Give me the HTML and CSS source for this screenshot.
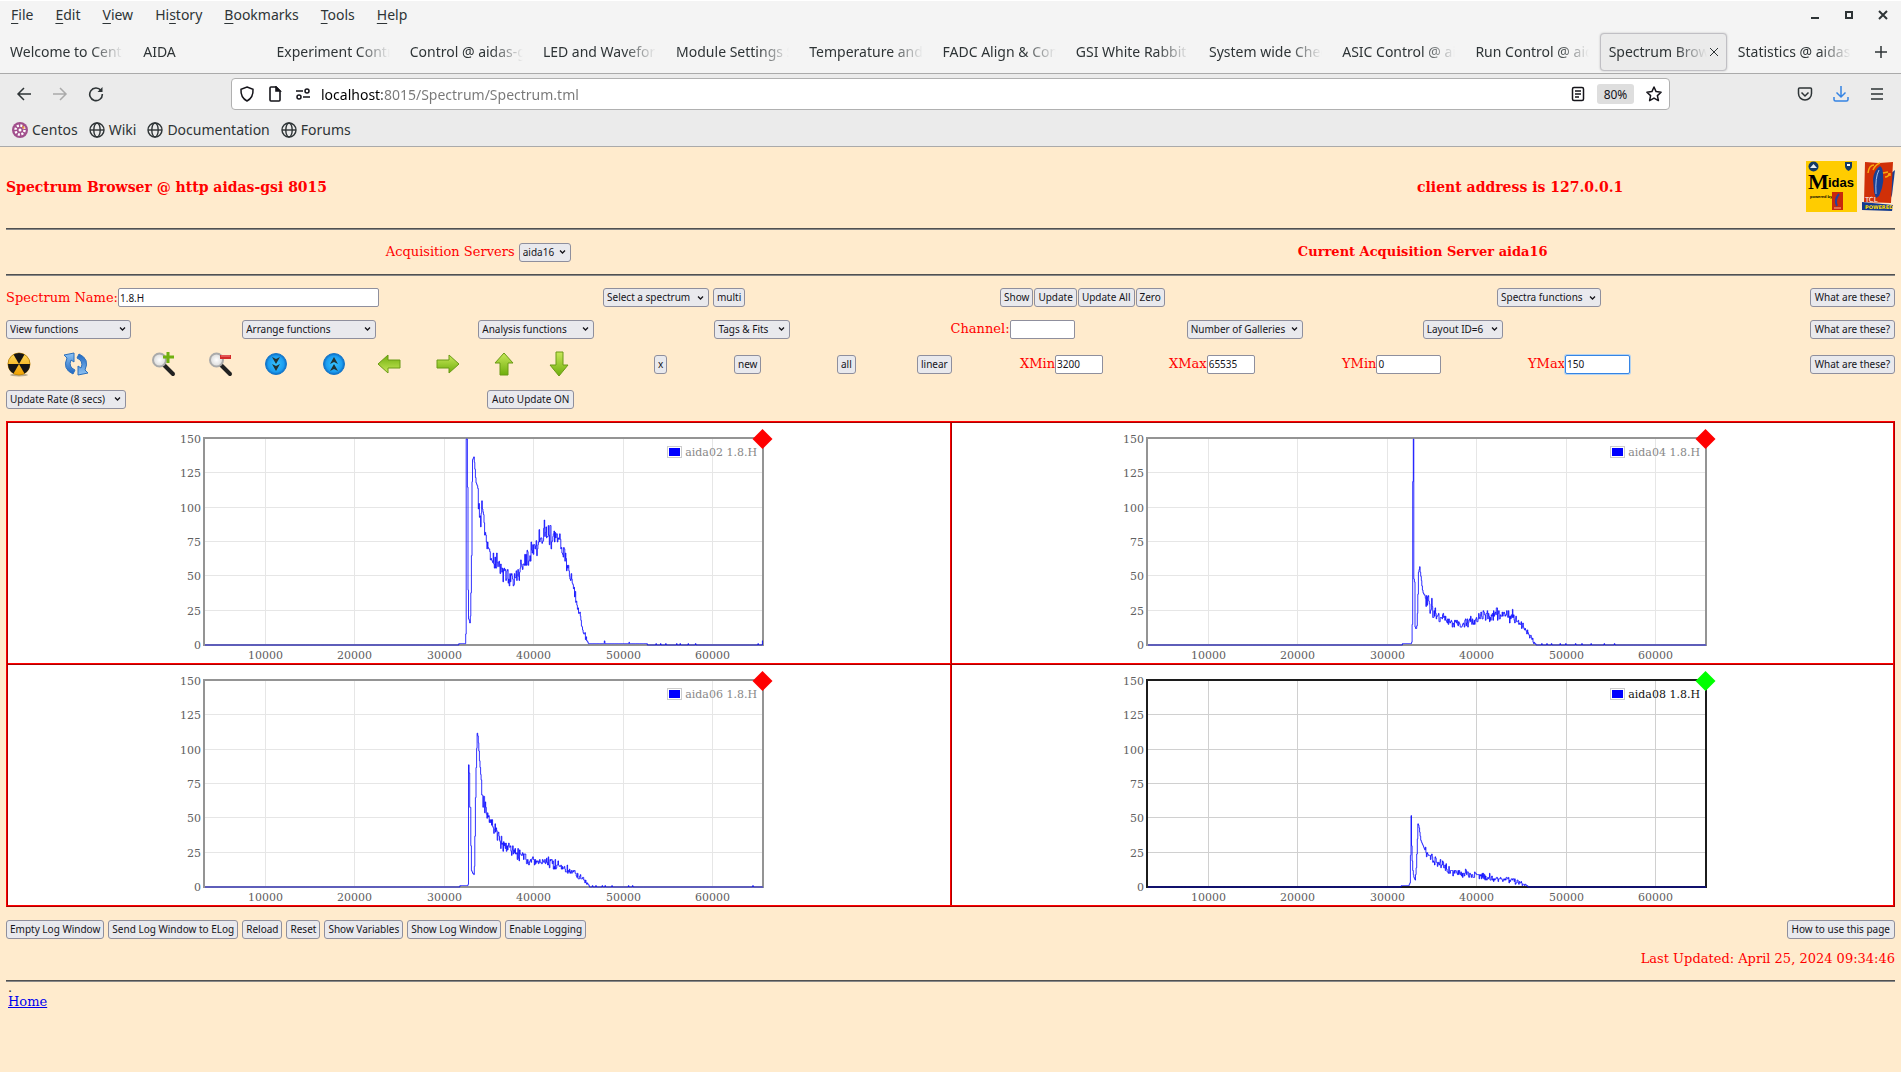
FILE: index.html
```html
<!DOCTYPE html>
<html lang="en">
<head>
<meta charset="utf-8">
<title>Spectrum Browser @ aidas-gsi</title>
<link rel="stylesheet" href="styles.css">
</head>
<body>
<svg class="defs" width="0" height="0" aria-hidden="true">
  <defs>
    <linearGradient id="green" x1="0" y1="0" x2="0" y2="1"><stop offset="0" stop-color="#c8e85a"/><stop offset="1" stop-color="#6fae0c"/></linearGradient>
    <linearGradient id="blue" x1="0" y1="0" x2="0" y2="1"><stop offset="0" stop-color="#8fc4f4"/><stop offset="1" stop-color="#1f66c0"/></linearGradient>
    <radialGradient id="disc"><stop offset="0" stop-color="#35c3ff"/><stop offset="0.75" stop-color="#1c9df0"/><stop offset="1" stop-color="#0b6cc4"/></radialGradient>
    <radialGradient id="lens"><stop offset="0" stop-color="#ffffff"/><stop offset="1" stop-color="#d9d9d9"/></radialGradient>
    <linearGradient id="gold" x1="0" y1="0" x2="0" y2="1"><stop offset="0" stop-color="#ffd95c"/><stop offset="1" stop-color="#f0a000"/></linearGradient>
    <symbol id="globe" viewBox="0 0 16 16"><g fill="none" stroke="#2e3436" stroke-width="1.4"><circle cx="8" cy="8" r="7"/><ellipse cx="8" cy="8" rx="3.2" ry="7"/><path d="M1 8h14"/></g></symbol>
    <symbol id="arrow" viewBox="0 0 26 26"><path d="M2 9h12V4l10 9-10 9v-5H2z" fill="url(#green)" stroke="#6a9a16" stroke-width="1"/></symbol>
    <symbol id="arrow-down" viewBox="0 0 26 26"><path d="M10 1h7v13h5L13 25 4 14h6z" fill="url(#green)" stroke="#6a9a16" stroke-width="1"/></symbol>
    <symbol id="arrow-up" viewBox="0 0 26 26"><path d="M9 24h8V12h5L13 2 4 12h5z" fill="url(#green)" stroke="#6a9a16" stroke-width="1"/></symbol>
    <symbol id="lens-tool" viewBox="0 0 26 26"><path d="M13 14l9 9" stroke="#222" stroke-width="4" stroke-linecap="round"/><circle cx="8.500" cy="9" r="6.500" fill="url(#lens)" stroke="#aaa" stroke-width="2"/></symbol>
  </defs>
</svg>

<header class="chrome">
  <div class="titlebar">
    <nav class="menus">
      <a href="#"><u>F</u>ile</a><a href="#"><u>E</u>dit</a><a href="#"><u>V</u>iew</a><a href="#">Hi<u>s</u>tory</a><a href="#"><u>B</u>ookmarks</a><a href="#"><u>T</u>ools</a><a href="#"><u>H</u>elp</a>
    </nav>
    <div class="window-buttons">
      <button aria-label="Minimize"><svg width="10" height="10"><path d="M1 8h8" stroke="#2e3436" stroke-width="2"/></svg></button>
      <button aria-label="Maximize"><svg width="10" height="10"><path d="M2 2h6v6H2z" fill="none" stroke="#2e3436" stroke-width="2"/></svg></button>
      <button aria-label="Close"><svg width="10" height="10"><path d="M1 1l8 8M9 1L1 9" stroke="#2e3436" stroke-width="2"/></svg></button>
    </div>
  </div>
  <div class="tabbar">
    <div class="tab"><span>Welcome to CentOS</span></div>
    <div class="tab"><span>AIDA</span></div>
    <div class="tab"><span>Experiment Control</span></div>
    <div class="tab"><span>Control @ aidas-gsi</span></div>
    <div class="tab"><span>LED and Waveform</span></div>
    <div class="tab"><span>Module Settings Se</span></div>
    <div class="tab"><span>Temperature and s</span></div>
    <div class="tab"><span>FADC Align &amp; Control</span></div>
    <div class="tab"><span>GSI White Rabbit T</span></div>
    <div class="tab"><span>System wide Check</span></div>
    <div class="tab"><span>ASIC Control @ aid</span></div>
    <div class="tab"><span>Run Control @ aidas</span></div>
    <div class="tab tab-active"><span>Spectrum Browser</span><button aria-label="Close tab"><svg width="10" height="10"><path d="M1 1l8 8M9 1L1 9" stroke="#2e3436"/></svg></button></div>
    <div class="tab"><span>Statistics @ aidas-g</span></div>
    <button class="new-tab" aria-label="New tab"><svg width="14" height="14"><path d="M7 1v12M1 7h12" stroke="#2e3436" stroke-width="1.500"/></svg></button>
  </div>
  <div class="toolbar">
    <div class="nav-buttons">
      <button aria-label="Back"><svg width="16" height="16" fill="none" stroke="#2e3436" stroke-width="1.500"><path d="M15 8H2M8 2L2 8l6 6"/></svg></button>
      <button aria-label="Forward"><svg width="16" height="16" fill="none" stroke="#aaa" stroke-width="1.500"><path d="M1 8h13M8 2l6 6-6 6"/></svg></button>
      <button aria-label="Reload"><svg width="16" height="16" fill="none" stroke="#2e3436" stroke-width="1.600"><path d="M13 4.500A6.300 6.300 0 1 0 14.300 8"/><path d="M14.500 1v5h-5z" fill="#2e3436" stroke="none"/></svg></button>
    </div>
    <div class="urlbar">
      <svg width="16" height="16" fill="none" stroke="#15141a" stroke-width="1.500"><path d="M8 1l6 2.300c.4 6-2 9.700-6 11.700C4 13 1.600 9.300 2 3.300z"/></svg>
      <svg width="16" height="16" fill="none" stroke="#15141a" stroke-width="1.600"><path d="M3 2q0-1 1-1h5l4 4v9q0 1-1 1H4q-1 0-1-1z"/><path d="M9 1v4h4z" fill="#15141a"/></svg>
      <svg width="16" height="16" fill="none" stroke="#15141a" stroke-width="1.500"><path d="M1 5h7M8 11h7"/><circle cx="12" cy="5" r="2"/><circle cx="4" cy="11" r="2"/></svg>
      <input class="url" type="text" aria-label="Address" value="localhost:8015/Spectrum/Spectrum.tml">
      <svg width="14" height="16" fill="none" stroke="#15141a" stroke-width="1.500"><rect x="1.500" y="1.500" width="11" height="13" rx="1.500"/><path d="M4 5h6M4 8h6M4 11h4"/></svg>
      <button class="zoom">80%</button>
      <svg width="16" height="16" fill="none" stroke="#15141a" stroke-width="1.500" stroke-linejoin="round"><path d="M8 1l2.100 4.600 5 .6-3.700 3.400 1 5L8 12.100l-4.400 2.500 1-5L.9 6.200l5-.6z"/></svg>
    </div>
    <div class="side-buttons">
      <button aria-label="Pocket"><svg width="16" height="16" fill="none" stroke="#2e3436" stroke-width="1.500"><path d="M2.500 2h11q1 0 1 1v4.500a6.500 6.500 0 0 1-13 0V3q0-1 1-1z"/><path d="M4.500 6.500L8 10l3.500-3.500"/></svg></button>
      <button aria-label="Downloads"><svg width="16" height="16" fill="none" stroke="#3584e4" stroke-width="1.500"><path d="M8 0v11M3.500 6.500L8 11l4.500-4.500M1 11v2.500q0 1.500 1.500 1.500h11q1.500 0 1.500-1.500V11"/></svg></button>
      <button aria-label="Menu"><svg width="16" height="16" stroke="#2e3436" stroke-width="1.500"><path d="M2 3h12M2 8h12M2 13h12"/></svg></button>
    </div>
  </div>
  <nav class="bookmarks">
    <a href="#"><svg width="16" height="16"><circle cx="8" cy="8" r="8" fill="#a14f8c"/><circle cx="8" cy="8" r="4.500" fill="none" stroke="#fff" stroke-width="2.500" stroke-dasharray="2 1.500"/><circle cx="8" cy="8" r="1.500" fill="#fff"/><path d="M10 3l3 3-2 1z" fill="#f0a030"/></svg>Centos</a>
    <a href="#"><svg width="16" height="16"><use href="#globe"/></svg>Wiki</a>
    <a href="#"><svg width="16" height="16"><use href="#globe"/></svg>Documentation</a>
    <a href="#"><svg width="16" height="16"><use href="#globe"/></svg>Forums</a>
  </nav>
</header>

<main class="page">
  <div class="heading">
    <h1>Spectrum Browser @ http aidas-gsi 8015</h1>
    <h1>client address is 127.0.0.1</h1>
    <div class="logos">
      <svg width="51" height="51" role="img" aria-label="Midas">
        <rect width="51" height="51" fill="#fc0"/>
        <circle cx="7.500" cy="5.500" r="5" fill="#123a66"/><path d="M4 7l3.500-4L11 7z" fill="#e8eef4"/>
        <path d="M39 1h7v4q0 3-3.500 5Q39 8 39 5z" fill="#123a66"/><path d="M41 3h3v2h-3z" fill="#fff"/>
        <text x="2" y="28" class="midas-m">M</text><text x="22" y="26" class="midas-rest">idas</text>
        <text x="4" y="37" class="midas-by">powered by</text>
        <rect x="26" y="31" width="11" height="18" fill="#c8280c"/><path d="M33 33q-5 6-2 12" fill="none" stroke="#24419c" stroke-width="2"/><path d="M28 47h7" stroke="#f8b090"/>
      </svg>
      <svg width="34" height="51" role="img" aria-label="Tcl powered">
        <path d="M1 41l31 3-1 6-30-1z" fill="#123a90"/>
        <path d="M28 14l6-5-3 25-3 8z" fill="#173f95"/>
        <path d="M4 1l14 1 14-1-2 41-27-1z" fill="#d03008"/>
        <path d="M19 5q-6 4-7 13l1 13 2 6 3-2 3-8q2-7 1-14 0-6-3-8z" fill="#173f95"/>
        <path d="M18 9q-4 7-3 24" fill="none" stroke="#a9c2ea"/>
        <path d="M7 12q1-8 6-8M12 9q2-5 7-7M22 12l5-1M24 16q4 0 4-4M29 12v3" fill="none" stroke="#f8a810" stroke-width="1.500"/>
        <text x="4" y="41" class="tcl">TCL</text><text x="4" y="48" class="tcl-by">POWERED</text>
      </svg>
    </div>
  </div>
  <hr>
  <div class="servers">
    <div><label for="server">Acquisition Servers</label> <select id="server" class="w52"><option>aida16</option></select></div>
    <h2>Current Acquisition Server aida16</h2>
  </div>
  <hr>

  <div class="row row-name">
    <div class="field"><label for="name">Spectrum Name:</label><input id="name" class="w261" type="text" value="1.8.H"></div>
    <div class="field spaced"><select class="w106" aria-label="Select a spectrum"><option>Select a spectrum</option></select><button>multi</button></div>
    <div class="field tight"><button>Show</button><button>Update</button><button>Update All</button><button>Zero</button></div>
    <div class="field"><select class="w104" aria-label="Spectra functions"><option>Spectra functions</option></select></div>
    <div class="field"><button class="help">What are these?</button></div>
  </div>
  <div class="row row-functions">
    <div class="field"><select class="w125" aria-label="View functions"><option>View functions</option></select></div>
    <div class="field"><select class="w134" aria-label="Arrange functions"><option>Arrange functions</option></select></div>
    <div class="field"><select class="w116" aria-label="Analysis functions"><option>Analysis functions</option></select></div>
    <div class="field"><select class="w76" aria-label="Tags and fits"><option>Tags &amp; Fits</option></select></div>
    <div class="field"><label for="channel">Channel:</label><input id="channel" class="w65" type="text"></div>
    <div class="field"><select class="w116" aria-label="Number of Galleries"><option>Number of Galleries</option></select></div>
    <div class="field"><select class="w80" aria-label="Layout"><option>Layout ID=6</option></select></div>
    <div class="field"><button class="help">What are these?</button></div>
  </div>
  <div class="row row-tools">
    <button class="icon" aria-label="Radiation"><svg width="26" height="26" viewBox="0 0 26 26"><ellipse cx="13" cy="24" rx="9" ry="1.500" fill="#b9a98c"/><circle cx="13" cy="13" r="11" fill="url(#gold)" stroke="#c08a10"/><g fill="#151515"><path id="blade" d="M13 13L7.500 3.500A11 11 0 0 1 18.500 3.500z"/><use href="#blade" transform="rotate(120 13 13)"/><use href="#blade" transform="rotate(240 13 13)"/></g></svg></button>
    <button class="icon" aria-label="Refresh"><svg width="26" height="26" viewBox="0 0 26 26"><g><path id="turn" d="M10 23Q-1 18 4 7L1 4 11 2v9L8 9q-3 7 4 10z" fill="url(#blue)" stroke="#2b6fbc"/><use href="#turn" transform="rotate(180 13 13)"/></g></svg></button>
    <button class="icon" aria-label="Zoom in"><svg width="26" height="26"><use href="#lens-tool"/><path d="M17 1v11M12 6h11" stroke="#6fb010" stroke-width="3"/></svg></button>
    <button class="icon" aria-label="Zoom out"><svg width="26" height="26"><use href="#lens-tool"/><path d="M12 6h11" stroke="#d42a2a" stroke-width="4"/><path d="M13 5h9" stroke="#f08080"/></svg></button>
    <button class="icon" aria-label="Page down"><svg width="26" height="26"><circle cx="13" cy="13" r="10.500" fill="url(#disc)" stroke="#1877c8"/><path d="M9 6l4 2 4-2-4 7zM9 13l4 2 4-2-4 7z" fill="#233"/></svg></button>
    <button class="icon" aria-label="Page up"><svg width="26" height="26"><circle cx="13" cy="13" r="10.500" fill="url(#disc)" stroke="#1877c8"/><path d="M9 13l4-7 4 7-4-2zM9 20l4-7 4 7-4-2z" fill="#233"/></svg></button>
    <button class="icon" aria-label="Left"><svg width="26" height="26"><use href="#arrow" transform="rotate(180 13 13)"/></svg></button>
    <button class="icon" aria-label="Right"><svg width="26" height="26"><use href="#arrow"/></svg></button>
    <button class="icon" aria-label="Up"><svg width="26" height="26"><use href="#arrow-up"/></svg></button>
    <button class="icon" aria-label="Down"><svg width="26" height="26"><use href="#arrow-down"/></svg></button>
    <div class="field"><button>x</button></div>
    <div class="field"><button>new</button></div>
    <div class="field"><button>all</button></div>
    <div class="field"><button>linear</button></div>
    <div class="field"><label for="xmin">XMin</label><input id="xmin" class="w48" type="text" value="3200"></div>
    <div class="field"><label for="xmax">XMax</label><input id="xmax" class="w48" type="text" value="65535"></div>
    <div class="field"><label for="ymin">YMin</label><input id="ymin" class="w65" type="text" value="0"></div>
    <div class="field"><label for="ymax">YMax</label><input id="ymax" class="w65 focused" type="text" value="150"></div>
    <div class="field"><button class="help">What are these?</button></div>
  </div>
  <div class="row row-update">
    <div class="field"><select class="w120" aria-label="Update Rate"><option>Update Rate (8 secs)</option></select></div>
    <div class="field"><button class="help">Auto Update ON</button></div>
  </div>

  <section class="galleries">
    <div class="gallery" data-spectrum="aida02"></div>
    <div class="gallery" data-spectrum="aida04"></div>
    <div class="gallery" data-spectrum="aida06"></div>
    <div class="gallery active" data-spectrum="aida08"></div>
  </section>

  <div class="actions">
    <button>Empty Log Window</button><button>Send Log Window to ELog</button><button>Reload</button><button>Reset</button><button>Show Variables</button><button>Show Log Window</button><button>Enable Logging</button>
    <button class="help">How to use this page</button>
  </div>
  <p class="updated">Last Updated: April 25, 2024 09:34:46</p>
  <hr>
  <footer><span class="dot">.</span><a href="#">Home</a></footer>
</main>
<script src="spectra.js"></script>
</body>
</html>
```
FILE: styles.css
```css
* { box-sizing: border-box; }
body { margin: 0; background: #ffebcd; font-family: "DejaVu Serif", serif; font-size: 13px; line-height: 16px; color: #f00; }
.defs { position: absolute; }
button, select, input { font-family: "Noto Sans", sans-serif; margin: 0; }
svg { display: block; flex: none; }

/* browser window */
.chrome { font-family: "Noto Sans", sans-serif; font-size: 14px; color: #2e3436; background: #f4f4f4; border-top: 1px solid #fff; }
.chrome a { color: inherit; text-decoration: none; }
.chrome button { border: 0; padding: 0; background: none; display: flex; align-items: center; justify-content: center; }
.titlebar { display: flex; justify-content: space-between; align-items: center; height: 28px; padding: 0 13px 0 11px; }
.menus { display: flex; gap: 22px; }
.menus u { text-underline-offset: 3px; }
.window-buttons { display: flex; gap: 24px; }
.tabbar { display: flex; align-items: center; height: 44px; padding-top: 2px; }
.tab { flex: 1 1 0; min-width: 0; height: 38px; margin: 0 1px; padding: 0 8px; display: flex; align-items: center; border: 1px solid transparent; border-radius: 4px; }
.tab span { flex: 1; min-width: 0; overflow: hidden; white-space: nowrap; padding: 4px 0; -webkit-mask-image: linear-gradient(90deg, #000 calc(100% - 32px), transparent); mask-image: linear-gradient(90deg, #000 calc(100% - 32px), transparent); }
.tab-active { background: #ebebeb; border-color: #c0bfc4; box-shadow: 0 0 2px #bbb; padding-right: 4px; }
.tab-active button { width: 16px; height: 20px; margin-left: -1px; }
.new-tab { width: 40px; height: 38px; }
.toolbar { display: grid; grid-template-columns: 231px 1fr 231px; align-items: center; height: 41px; border-top: 1px solid #aaa; background: #ebebeb; }
.nav-buttons { display: flex; gap: 20px; padding-left: 16px; }
.side-buttons { display: flex; gap: 20px; justify-content: flex-end; padding-right: 16px; }
.urlbar { display: flex; align-items: center; gap: 12px; height: 32px; padding: 0 7px; background: #fff; border: 1px solid #b0b0b0; border-radius: 4px; }
.url { flex: 1; min-width: 0; border: 0; outline: 0; padding: 0; margin-left: -2px; font-size: 14px; height: 24px; color: #000; background: linear-gradient(90deg, #000 61px, #777 61px); -webkit-background-clip: text; background-clip: text; -webkit-text-fill-color: transparent; }
.chrome .zoom { width: 37px; height: 20px; background: #dedede; border-radius: 3px; font-size: 12px; color: #15141a; }
.bookmarks { display: flex; align-items: center; gap: 11px; height: 33px; padding-left: 12px; background: #ebebeb; border-bottom: 1px solid #aaa; }
.bookmarks a { display: flex; align-items: center; gap: 4px; }

/* page */
.page { padding: 0 6px; }
.page hr { height: 2px; margin: 0; border: 0; background: #888; border-top: 1px solid #505050; }
h1, h2 { margin: 0; font-weight: bold; }
h1 { font-size: 14px; line-height: 18px; }
h2 { font-size: 13px; line-height: 16px; }
.heading { display: grid; grid-template-columns: 1411fr 300fr 178fr; align-items: center; height: 81px; padding-bottom: 2px; }
.logos { display: flex; justify-content: flex-end; gap: 4px; }
.midas-m { font: bold 22px "Liberation Serif", serif; }
.midas-rest { font: bold 13px "Liberation Sans", sans-serif; }
.midas-by { font: bold 4px "Liberation Sans", sans-serif; }
.tcl { font: 7px "DejaVu Sans", sans-serif; fill: #fff; }
.tcl-by { font: bold 5px "DejaVu Sans", sans-serif; fill: #fd0; }
.servers { display: grid; grid-template-columns: 1fr 1fr; align-items: center; height: 44px; text-align: center; }
.servers select { vertical-align: middle; }

.page button, .page select, .page input { height: 19px; font-size: 10px; line-height: 15px; color: #15141a; border: 1px solid #8f8f9d; border-radius: 3px; background-color: #e9e9ed; padding: 0 3px; white-space: nowrap; }
.page .help { padding: 0 4px; }
.page input { background-color: #fff; border-radius: 2px; padding: 0 1px; }
.page select { appearance: none; background-repeat: no-repeat; background-position: right 4px center; background-image: url("data:image/svg+xml,%3Csvg xmlns='http://www.w3.org/2000/svg' width='7' height='6'%3E%3Cpath d='M1 1.500l2.500 2.500L6 1.500' fill='none' stroke='%2315141a' stroke-width='1.300'/%3E%3C/svg%3E"); }
.page .focused { border-color: #3584e4; box-shadow: 0 0 0 1px #b4d2ee; }
.page .icon { border: 0; background: none; padding: 0; width: 26px; height: 26px; }
.w48 { width: 48px; } .w52 { width: 52px; } .w65 { width: 65px; } .w76 { width: 76px; } .w80 { width: 80px; }
.w104 { width: 104px; } .w106 { width: 106px; } .w116 { width: 116px; } .w120 { width: 120px; } .w125 { width: 125px; } .w134 { width: 134px; } .w261 { width: 261px; }

.row { display: grid; align-items: center; }
.field { display: flex; align-items: center; min-width: 0; white-space: nowrap; }
.spaced { gap: 4px; }
.tight { gap: 1px; }
.row-name, .row-functions, .row-tools { .field:last-child { justify-content: flex-end; } }
.row-name { grid-template-columns: 597fr 397fr 497fr 290fr 108fr; height: 43px; }
.row-functions { grid-template-columns: repeat(8, 1fr); height: 20px; }
.row-tools { grid-template-columns: 57fr 88fr 57fr 55fr 58fr 55fr 59fr 56fr 55fr 108fr 80fr 103fr 80fr 103fr 149fr 173fr 186fr 260fr 107fr; height: 50px; }
.row-update { grid-template-columns: 481fr 1408fr; height: 20px; }

.galleries { display: grid; grid-template-columns: calc(50% + 1px) 1fr; margin-top: 12px; border: 2px ridge #f00; background: #fff; }
.gallery { display: flex; justify-content: center; height: 240px; }
.gallery:nth-child(odd) { border-right: 2px ridge #f00; }
.gallery:nth-child(-n+2) { height: 242px; border-bottom: 2px ridge #f00; }
.gallery svg { overflow: visible; }
.gallery text { font-size: 11px; fill: #606060; }
.gallery .left { text-anchor: end; }
.gallery .below { text-anchor: middle; }
.gallery .legend { fill: #888; text-anchor: end; }
.gallery .grid { stroke: #e6e6e6; }
.gallery .frame { fill: none; stroke: #949494; stroke-width: 2; }
.gallery .trace { fill: none; stroke: #00f; stroke-opacity: 0.8; }
.gallery .status { fill: #f00; }
.active .legend { fill: #111; }
.active .grid { stroke: #d0d0d0; }
.active .frame { stroke: #1c1c1c; }
.active .status { fill: #0f0; }

.actions { display: flex; gap: 4px; margin-top: 13px; }
.actions .help { margin-left: auto; }
.updated { margin: 12px 0 13px; text-align: right; }
footer { display: flex; flex-direction: column; align-items: flex-start; padding: 0 2px; color: #333; }
footer a { color: #00e; }
.dot { line-height: 12px; }
```
FILE: spectra.js
```js
// Outline of each spectrum as channel, counts pairs; shot noise is added above noiseFrom.
const spectra = {
  aida02: {
    noiseFrom: 33800,
    shape: [31500,1, 32280,1, 32330,10, 32380,150, 32470,150, 32515,113, 32580,35, 32640,19, 32778,16, 32860,23, 32910,44, 32980,73, 33010,113, 33060,134, 33219,137, 33320,130, 33450,118, 33660,115, 33730,104, 34100,96, 34300,88, 34673,76, 35000,69, 35334,62, 35900,57, 36660,51, 37230,49, 37700,51, 38200,51, 38600,57, 39080,61, 39700,69, 40400,75, 41100,80, 41800,79, 42450,79, 42850,73, 43200,65, 43490,61, 43930,53, 44280,43, 44800,28, 45250,14, 45700,5, 46000,1, 52500,1, 52600,0],
    peaks: {33740:99, 33900:93, 34030:86, 34120:105, 34320:95, 35800:67, 37230:43, 38480:62, 41100:91, 41850:87, 47850:3, 50600:2, 53600:1, 54100:1, 54700:1, 55900:1, 56300:1, 57200:1, 58000:1, 65000:1, 65500:3}
  },
  aida04: {
    noiseFrom: 34200,
    shape: [31589,1, 32600,1, 32691,3, 32740,48, 32780,150, 32850,150, 32880,48, 32980,45, 33020,13, 33130,11, 33240,15, 33320,30, 33395,53, 33528,57, 33660,50, 33880,39, 34150,35, 34320,31, 34500,31, 34670,26, 35000,25, 35420,22, 35860,20, 36500,18, 37180,16, 38280,15, 39000,17, 39600,18, 40700,22, 41370,21, 42250,23, 43100,22, 43920,20, 44500,17, 45100,13, 45550,9, 46000,5, 46430,1, 46500,0],
    peaks: {34935:34, 35300:27, 36200:23, 40650:25, 42200:27, 43960:26, 47200:1, 47800:1, 48300:1, 49250:1, 49900:1, 51000:1, 51700:1, 52700:1, 54200:1, 55300:1}
  },
  aida06: {
    noiseFrom: 34100,
    shape: [31630,1, 32560,1, 32640,7, 32690,89, 32770,57, 32866,59, 32910,16, 32960,12, 33130,10, 33263,9, 33350,39, 33440,80, 33530,100, 33616,112, 33700,108, 33880,90, 34060,77, 34230,64, 34540,58, 34900,48, 35330,43, 35770,38, 36200,33, 36660,30, 37300,28, 38200,24, 39080,20, 39520,18, 40840,18, 42170,17, 43050,14, 43930,12, 44800,9, 45480,5, 46000,2, 46160,0],
    peaks: {32700:89, 33616:112, 35750:43, 36300:37, 36530:26, 37600:30, 38200:28, 38300:19, 38780:24, 41350:21, 46500:1, 46900:1, 47600:1, 47900:1, 48700:1, 50500:1, 51000:1, 64400:1}
  },
  aida08: {
    noiseFrom: 34300,
    shape: [31450,1, 32340,1, 32480,4, 32560,52, 32640,30, 32735,14, 32860,7, 33040,5, 33170,15, 33265,33, 33395,46, 33520,41, 33660,34, 34100,27, 34540,22, 34890,21, 35425,17, 36000,16, 36750,13, 37400,11, 38500,10, 39830,9, 41370,7, 42700,6, 44000,5, 44900,3, 45300,2, 45690,0],
    peaks: {32580:52, 33395:46, 34220:29, 34890:24, 36530:17, 37800:9, 40650:10}
  }
};

const xMin = 3200, xMax = 65535, yMax = 150, bin = 64;
const plot = {left: 26, right: 584, top: 16, bottom: 222};
const px = x => plot.left + (x - xMin) / (xMax - xMin) * (plot.right - plot.left);
const py = y => plot.bottom - y / yMax * (plot.bottom - plot.top);

function counts(shape, x) {
  if (x < shape[0]) return 0;
  for (let i = 0; i < shape.length - 2; i += 2) {
    if (x < shape[i + 2]) {
      const t = (x - shape[i]) / (shape[i + 2] - shape[i]);
      return shape[i + 1] + t * (shape[i + 3] - shape[i + 1]);
    }
  }
  return 0;
}

function trace(spectrum, seed) {
  const random = () => (seed = (seed * 16807) % 2147483647) / 2147483647;
  const peaks = Object.entries(spectrum.peaks);
  let path = `M${px(xMin)} ${py(0)}`;
  for (let x = xMin; x < xMax; x += bin) {
    let y = counts(spectrum.shape, x);
    if (x > spectrum.noiseFrom && y > 2) y += (random() + random() - 1) * Math.sqrt(y) * 1.1;
    const peak = peaks.find(([at]) => at >= x && at < x + bin);
    if (peak) y = peak[1];
    path += `V${py(Math.round(y)).toFixed(1)}H${px(x + bin > xMax ? xMax : x + bin).toFixed(1)}`;
  }
  return path;
}

document.querySelectorAll(".gallery").forEach((gallery, index) => {
  const name = gallery.dataset.spectrum;
  let out = "";
  for (let x = 10000; x <= 60000; x += 10000) {
    const at = Math.round(px(x)) - 0.5;
    out += `<path class="grid" d="M${at} ${plot.top}V${plot.bottom}"/><text class="below" x="${at}" y="236">${x}</text>`;
  }
  for (let y = 0; y <= yMax; y += 25) {
    const at = Math.round(py(y)) - 0.5;
    out += `<path class="grid" d="M${plot.left} ${at}H${plot.right}"/><text class="left" x="22" y="${at + 4}">${y}</text>`;
  }
  out += `<rect class="frame" x="25" y="15" width="559" height="207"/>`;
  out += `<path class="trace" d="${trace(spectra[name], 77 + index)}"/>`;
  out += `<rect x="488.500" y="23.500" width="14" height="11" fill="#fff" stroke="#ccc"/><rect x="490" y="25" width="11" height="8" fill="#00f"/>`;
  out += `<text class="legend" x="578" y="33">${name} 1.8.H</text>`;
  out += `<path class="status" d="M583.500 6l10 10-10 10-10-10z"/>`;
  gallery.innerHTML = `<svg width="600" height="240" role="img" aria-label="${name} 1.8.H">${out}</svg>`;
});
```
